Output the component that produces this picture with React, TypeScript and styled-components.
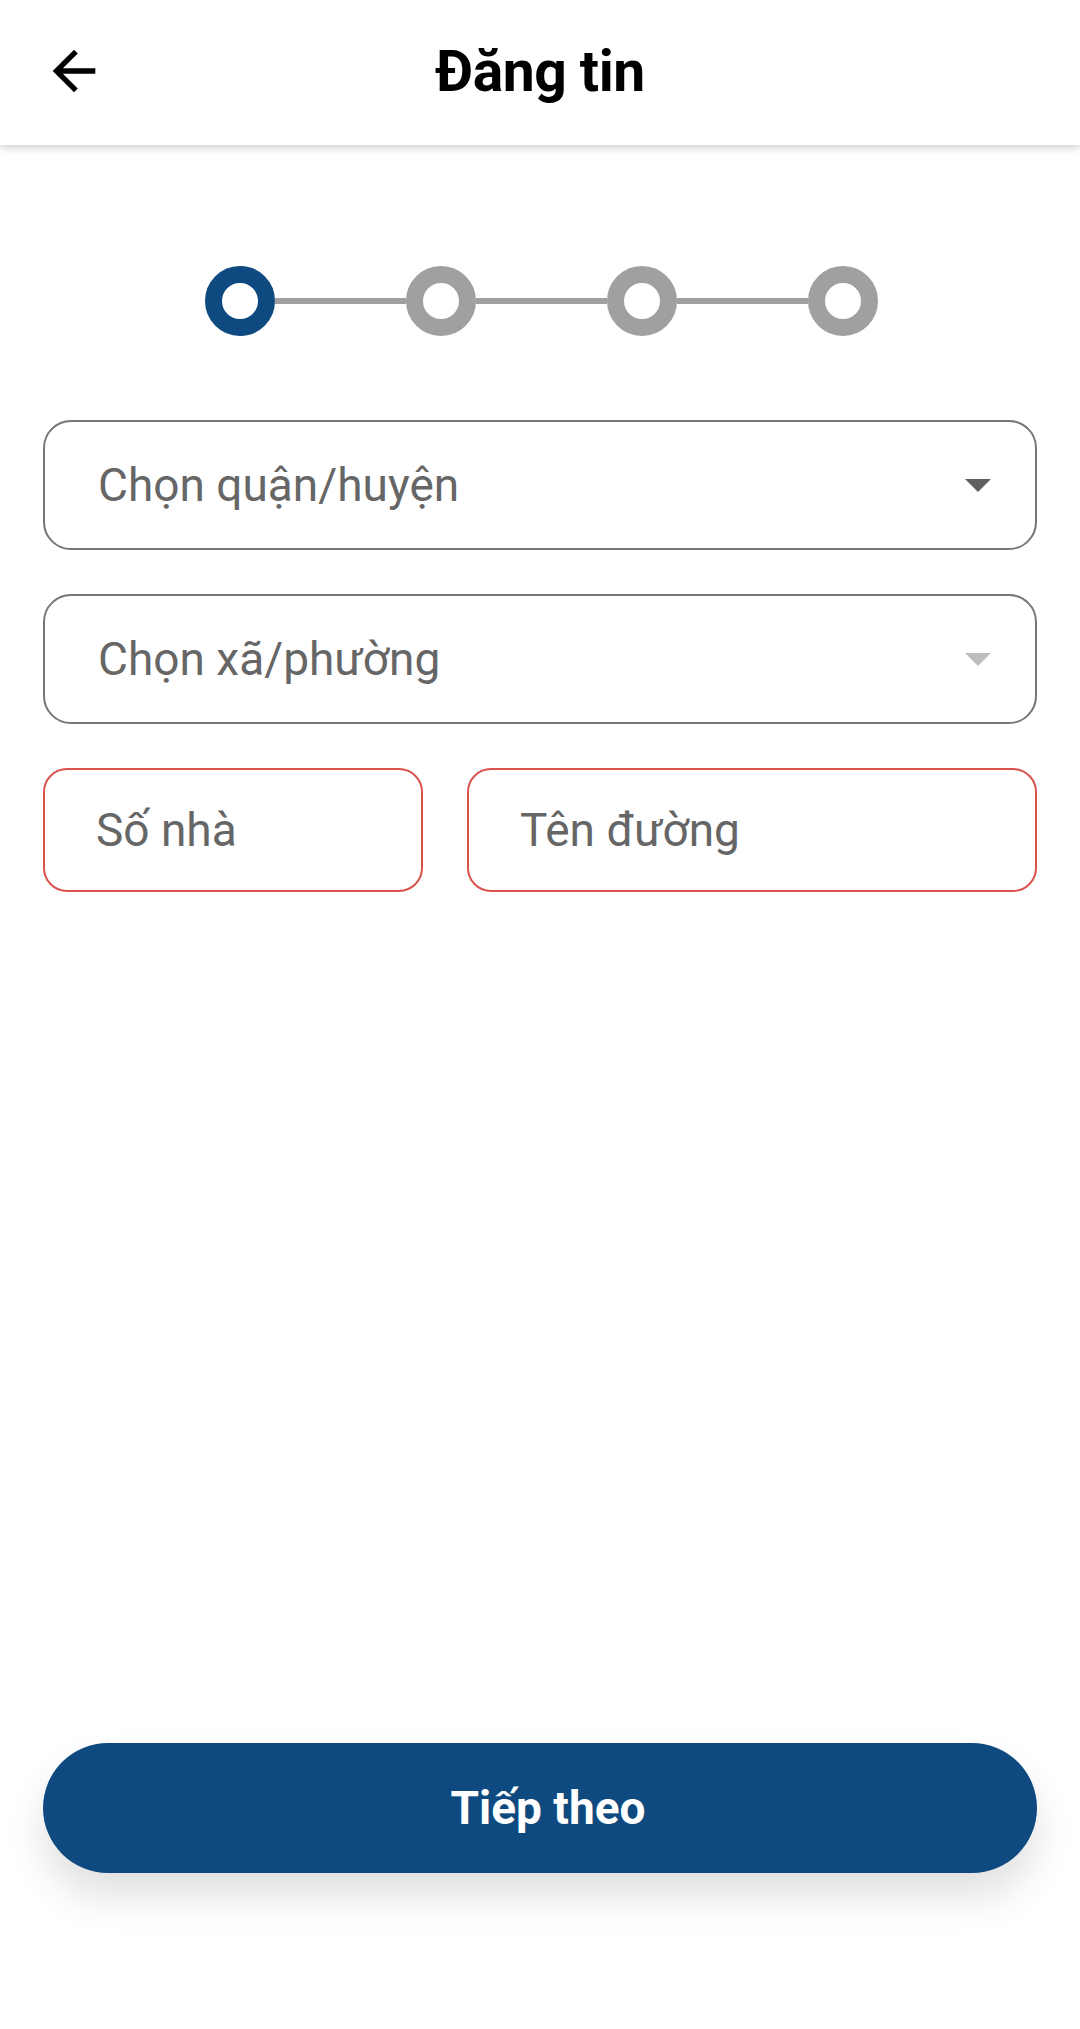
import styled, { createGlobalStyle } from "styled-components";

const GlobalStyle = createGlobalStyle`
  html, body {
    margin: 0;
    padding: 0;
    background: #ffffff;
    font-family: Roboto, "Noto Sans", sans-serif;
  }
`;

const Page = styled.div`
  display: flex;
  flex-direction: column;
  min-height: 2029px;
  background: #ffffff;
`;

const TopBar = styled.header`
  position: relative;
  height: 145px;
  display: flex;
  align-items: center;
  justify-content: center;
  background: #ffffff;
  box-shadow: 0 3px 8px rgba(0, 0, 0, 0.18);
  z-index: 1;
`;

const BackButton = styled.button`
  position: absolute;
  left: 42px;
  top: 39px;
  width: 64px;
  height: 64px;
  padding: 0;
  border: none;
  background: transparent;
  display: flex;
  align-items: center;
  justify-content: center;
`;

const Title = styled.h1`
  margin: 0 0 2px;
  font-size: 57px;
  font-weight: 700;
  color: #000000;
  letter-spacing: -0.5px;
`;

const Stepper = styled.div`
  display: flex;
  align-items: center;
  justify-content: center;
  margin-top: 121px;
  margin-left: 2px;
`;

const Dot = styled.div<{ $active?: boolean }>`
  width: 70px;
  height: 70px;
  box-sizing: border-box;
  border-radius: 50%;
  border: 17px solid ${(p) => (p.$active ? "#0e4a80" : "#a0a0a0")};
  background: #ffffff;
  flex-shrink: 0;
`;

const Line = styled.div`
  width: 131px;
  height: 6px;
  background: #a0a0a0;
`;

const Form = styled.div`
  display: flex;
  flex-direction: column;
  gap: 44px;
  padding: 0 43px;
  margin-top: 84px;
`;

const Select = styled.div`
  height: 130px;
  box-sizing: border-box;
  border: 2px solid #777777;
  border-radius: 28px;
  display: flex;
  align-items: center;
  justify-content: space-between;
  padding: 0 44px 0 53px;
`;

const Placeholder = styled.span`
  font-size: 46px;
  color: #666666;
`;

const Caret = styled.span<{ $disabled?: boolean }>`
  width: 0;
  height: 0;
  border-left: 13px solid transparent;
  border-right: 13px solid transparent;
  border-top: 13px solid ${(p) => (p.$disabled ? "#bdbdbd" : "#5f5f5f")};
`;

const Row = styled.div`
  display: grid;
  grid-template-columns: 380px 1fr;
  gap: 44px;
`;

const Input = styled.div`
  height: 124px;
  box-sizing: border-box;
  border: 2px solid #d9534c;
  border-radius: 24px;
  display: flex;
  align-items: center;
  padding: 0 51px;
`;

const Spacer = styled.div`
  flex: 1;
`;

const NextButton = styled.button`
  margin: 0 43px 156px;
  height: 130px;
  padding: 0 0 0 16px;
  border: none;
  border-radius: 65px;
  background: #0e4a80;
  color: #ffffff;
  font-family: Roboto, "Noto Sans", sans-serif;
  font-size: 46px;
  font-weight: 700;
  box-shadow: 0 24px 40px rgba(0, 0, 0, 0.12);
`;

export default function App() {
  return (
    <Page>
      <GlobalStyle />
      <TopBar>
        <BackButton>
          <svg width="64" height="64" viewBox="0 0 24 24">
            <path
              d="M20 11H7.83l5.59-5.59L12 4l-8 8 8 8 1.41-1.41L7.83 13H20v-2z"
              fill="#000000"
            />
          </svg>
        </BackButton>
        <Title>Đăng tin</Title>
      </TopBar>
      <Stepper>
        <Dot $active />
        <Line />
        <Dot />
        <Line />
        <Dot />
        <Line />
        <Dot />
      </Stepper>
      <Form>
        <Select>
          <Placeholder>Chọn quận/huyện</Placeholder>
          <Caret />
        </Select>
        <Select>
          <Placeholder>Chọn xã/phường</Placeholder>
          <Caret $disabled />
        </Select>
        <Row>
          <Input>
            <Placeholder>Số nhà</Placeholder>
          </Input>
          <Input>
            <Placeholder>Tên đường</Placeholder>
          </Input>
        </Row>
      </Form>
      <Spacer />
      <NextButton>Tiếp theo</NextButton>
    </Page>
  );
}
